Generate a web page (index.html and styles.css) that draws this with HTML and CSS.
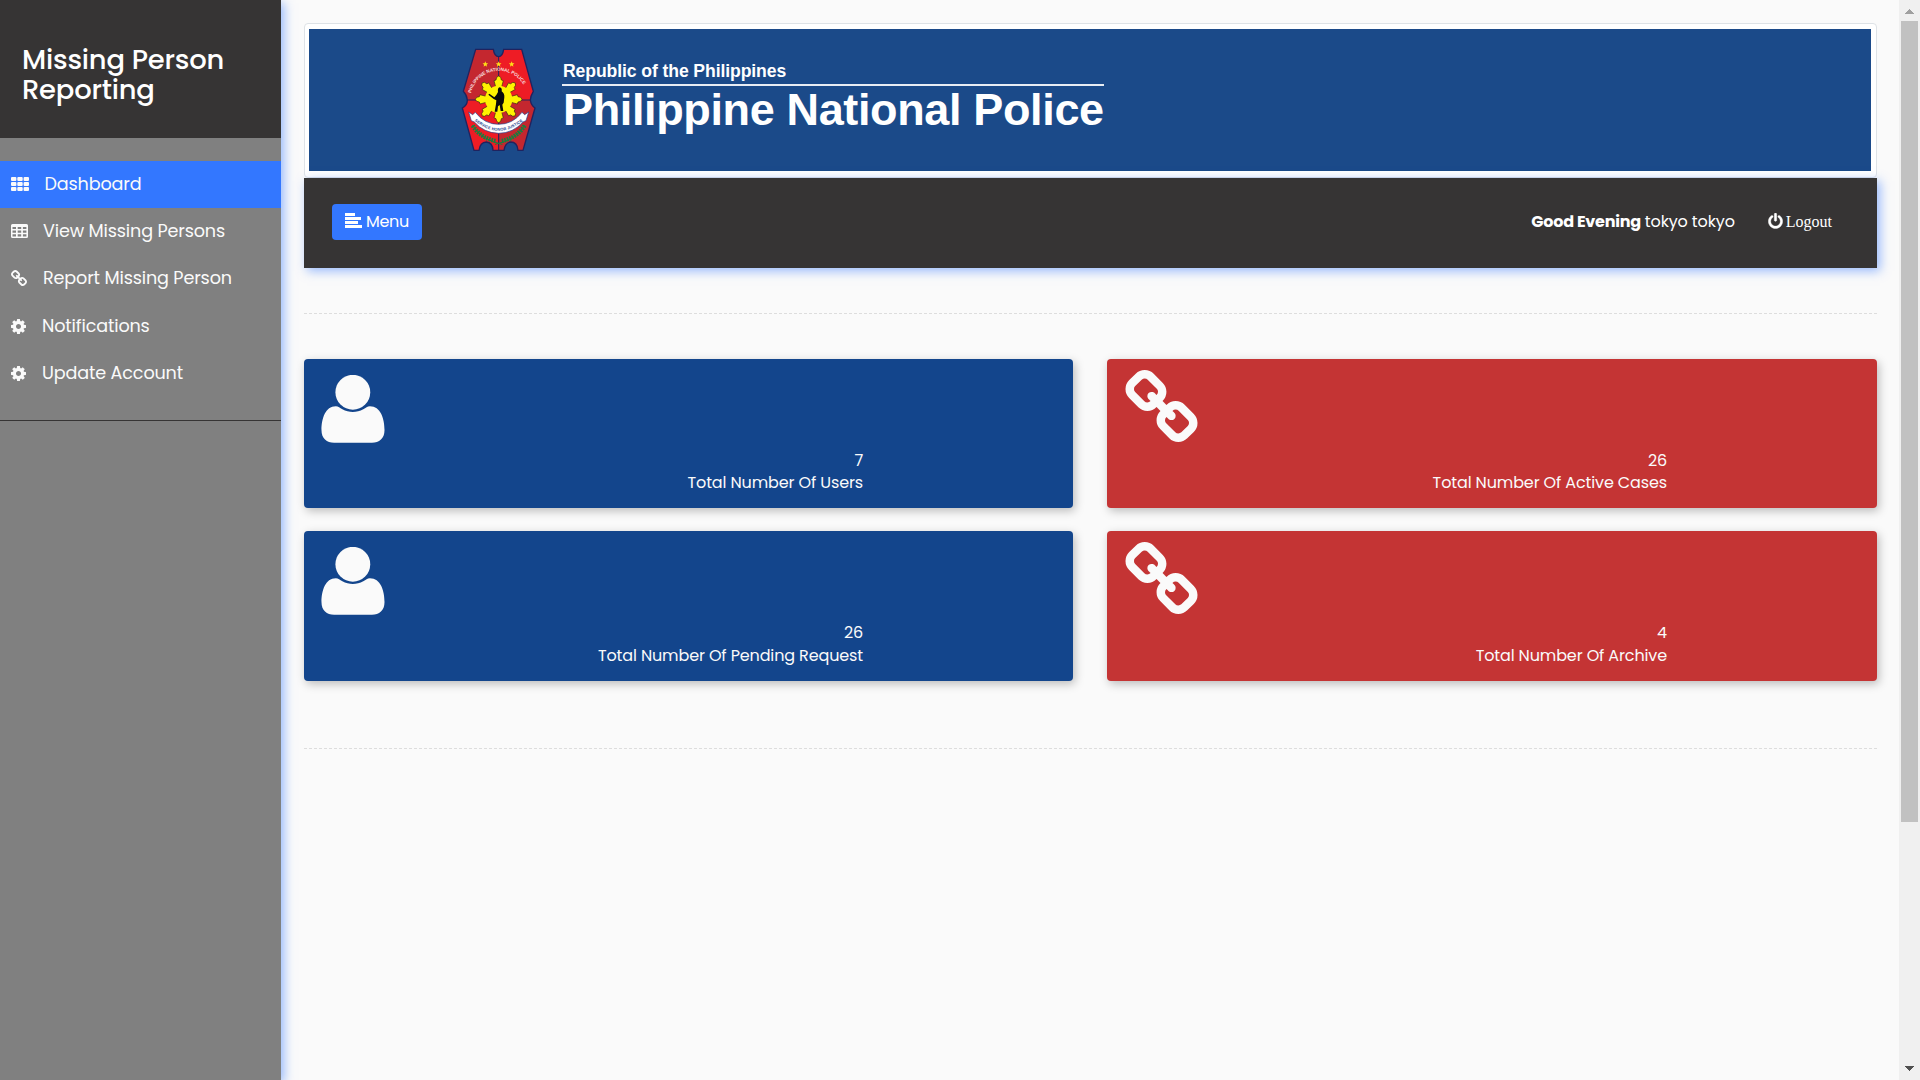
FILE: index.html
```html
<!DOCTYPE html>
<html lang="en">
<head>
<meta charset="utf-8">
<title>Missing Person Reporting</title>
<link rel="stylesheet" href="styles.css">
</head>
<body>
<svg class="defs" aria-hidden="true">
  <symbol id="i-link" viewBox="80 16 1632 1632"><path d="M1520 1216q0-40-28-68l-208-208q-28-28-68-28-42 0-72 32 3 3 19 18.500t21.500 21.500 15 19 13 25.500 3.500 27.500q0 40-28 68t-68 28q-15 0-27.500-3.500t-25.500-13-19-15-21.500-21.500-18.500-19q-33 31-33 73 0 40 28 68l206 207q27 27 68 27 40 0 68-26l147-146q28-28 28-67zm-703-705q0-40-28-68l-206-207q-28-28-68-28-39 0-68 27l-147 146q-28 28-28 67 0 40 28 68l208 208q27 27 68 27 42 0 72-31-3-3-19-18.500t-21.500-21.500-15-19-13-25.500-3.500-27.500q0-40 28-68t68-28q15 0 27.500 3.500t25.500 13 19 15 21.500 21.500 18.500 19q33-31 33-73zm895 705q0 120-85 203l-147 146q-83 83-203 83-121 0-204-85l-206-207q-83-83-83-203 0-123 88-209l-88-88q-86 88-208 88-120 0-204-84l-208-208q-84-84-84-204t85-203l147-146q83-83 203-83 121 0 204 85l206 207q83 83 83 203 0 123-88 209l88 88q86-88 208-88 120 0 204 84l208 208q84 84 84 204z"/></symbol>
  <symbol id="i-cog" viewBox="128 128 1536 1536"><path d="M1152 896q0-106-75-181t-181-75-181 75-75 181 75 181 181 75 181-75 75-181zm512-109v222q0 12-8 23t-20 13l-185 28q-19 54-39 91 35 50 107 138 10 12 10 25t-9 23q-27 37-99 108t-94 71q-12 0-26-9l-138-108q-44 23-91 38-16 136-29 186-7 28-36 28h-222q-14 0-24.500-8.500t-11.500-21.500l-28-184q-49-16-90-37l-141 107q-10 9-25 9-14 0-25-11-126-114-165-168-7-10-7-23 0-12 8-23 15-21 51-66.500t54-70.500q-27-50-41-99l-183-27q-13-2-21-12.500t-8-23.500v-222q0-12 8-23t19-13l186-28q14-46 39-92-40-57-107-138-10-12-10-24 0-10 9-23 26-36 98.500-107.500t94.500-71.500q13 0 26 10l138 107q44-23 91-38 16-136 29-186 7-28 36-28h222q14 0 24.500 8.500t11.500 21.500l28 184q49 16 90 37l142-107q9-9 24-9 13 0 25 10 129 119 165 170 7 8 7 22 0 12-8 23-15 21-51 66.500t-54 70.500q26 50 41 98l183 28q13 2 21 12.500t8 23.500z"/></symbol>
  <symbol id="i-user" viewBox="93 104 192 205"><circle cx="188.500" cy="156" r="52.500"/><path d="M94 270C94 235 106 198 137 198C145 198 149 203 157 207C177 218 200 218 220 207C228 203 232 198 240 198C272 198 284 235 284 270C284 296 268 308.500 246 308.500H132C110 308.500 94 296 94 270Z"/></symbol>
</svg>
<div class="page">
  <nav class="sidebar">
    <header class="sidebar-head"><h3>Missing Person Reporting</h3></header>
    <ul class="menu">
      <li class="active"><svg class="ico ico-th" viewBox="0 0 18 14"><path d="M1 0h3.400a1 1 0 0 1 1 1v2a1 1 0 0 1-1 1H1a1 1 0 0 1-1-1V1a1 1 0 0 1 1-1zm6.300 0h3.400a1 1 0 0 1 1 1v2a1 1 0 0 1-1 1H7.300a1 1 0 0 1-1-1V1a1 1 0 0 1 1-1zm6.300 0H17a1 1 0 0 1 1 1v2a1 1 0 0 1-1 1h-3.400a1 1 0 0 1-1-1V1a1 1 0 0 1 1-1zM1 5h3.400a1 1 0 0 1 1 1v2a1 1 0 0 1-1 1H1a1 1 0 0 1-1-1V6a1 1 0 0 1 1-1zm6.300 0h3.400a1 1 0 0 1 1 1v2a1 1 0 0 1-1 1H7.300a1 1 0 0 1-1-1V6a1 1 0 0 1 1-1zm6.300 0H17a1 1 0 0 1 1 1v2a1 1 0 0 1-1 1h-3.400a1 1 0 0 1-1-1V6a1 1 0 0 1 1-1zM1 10h3.400a1 1 0 0 1 1 1v2a1 1 0 0 1-1 1H1a1 1 0 0 1-1-1v-2a1 1 0 0 1 1-1zm6.300 0h3.400a1 1 0 0 1 1 1v2a1 1 0 0 1-1 1H7.300a1 1 0 0 1-1-1v-2a1 1 0 0 1 1-1zm6.300 0H17a1 1 0 0 1 1 1v2a1 1 0 0 1-1 1h-3.400a1 1 0 0 1-1-1v-2a1 1 0 0 1 1-1z"/></svg><span>Dashboard</span></li>
      <li class="up"><svg class="ico ico-table" viewBox="0 0 17 14"><path fill-rule="evenodd" d="M1.500 0h14A1.500 1.500 0 0 1 17 1.500v11a1.500 1.500 0 0 1-1.500 1.500h-14A1.500 1.500 0 0 1 0 12.500v-11A1.500 1.500 0 0 1 1.500 0zM1.500 3v2h3.500V3zm5.200 0v2h3.500V3zm5.200 0v2h3.500V3zM1.500 6.500v2.200h3.500V6.500zm5.200 0v2.200h3.500V6.500zm5.200 0v2.200h3.500V6.500zM1.500 10.200v2.200h3.500v-2.200zm5.200 0v2.200h3.500v-2.200zm5.200 0v2.200h3.500v-2.200z"/></svg><span>View Missing Persons</span></li>
      <li class="up"><svg class="ico ico-link"><use href="#i-link"/></svg><span>Report Missing Person</span></li>
      <li><svg class="ico ico-cog"><use href="#i-cog"/></svg><span>Notifications</span></li>
      <li><svg class="ico ico-cog"><use href="#i-cog"/></svg><span>Update Account</span></li>
    </ul>
  </nav>
  <main class="content">
    <div class="thumb">
      <div class="banner">
        <svg class="badge" viewBox="60 51 234 315">
          <defs>
            <clipPath id="shield"><path d="M107 58H160Q163 79 176 80Q188 79 191 58H245L280 184Q271 199 271 210Q273 226 285 234L249 361H234Q232 336 212 336Q195 338 192 361H159Q158 338 139 336Q120 337 117 361H102L67 234Q82 226 82 210Q80 194 70 184Z"/></clipPath>
            <path id="arc" d="M93 190A86 86 0 0 1 261 190"/>
            <path id="motto" d="M102 271Q176 334 251 271"/>
          </defs>
          <g clip-path="url(#shield)">
            <path fill="#ee1c25" d="M60 50H300V370H60z"/>
            <path fill="#c4272f" d="M60 50H176V210H60zM176 210H300V370H176z"/>
            <path fill="none" stroke="#20235f" stroke-width="3" d="M176 80V361M82 210H271"/>
          </g>
          <path fill="none" stroke="#20235f" stroke-width="4" d="M107 58H160Q163 79 176 80Q188 79 191 58H245L280 184Q271 199 271 210Q273 226 285 234L249 361H234Q232 336 212 336Q195 338 192 361H159Q158 338 139 336Q120 337 117 361H102L67 234Q82 226 82 210Q80 194 70 184Z"/>
          <g fill="#ffde17">
            <path id="star" d="M136 94l2.400 5.600 6 .5-4.600 4 1.400 5.900-5.200-3.200-5.200 3.200 1.400-5.900-4.600-4 6-.5z"/>
            <use href="#star" x="40"/><use href="#star" x="79"/>
          </g>
          <g fill="#fff200" stroke="#3b2a10" stroke-width="2">
            <g id="rays"><path id="ray" d="M169 178L162 152 168 150 170 142 176 138 182 142 184 150 190 152 183 178Z"/><use href="#ray" transform="rotate(180 176 208)"/></g>
            <use href="#rays" transform="rotate(45 176 208)"/><use href="#rays" transform="rotate(90 176 208)"/><use href="#rays" transform="rotate(135 176 208)"/>
            <circle cx="176" cy="208" r="41" stroke="none"/>
          </g>
          <path fill="#0b0b0b" d="M174 186Q172 174 179 172Q187 174 185 184Q194 190 193 202L191 218 187 224 190 243H182L179 225 174 229 172 245H164L168 222 169 211 161 207 145 194 148 191 163 202 169 195Z"/>
          <g fill="none" stroke="#16803e" stroke-linecap="round">
            <path stroke-width="13" stroke-linecap="butt" stroke-dasharray="5 3" d="M98 287Q124 326 168 333M254 287Q228 326 184 333"/>
            <path stroke-width="3" d="M98 287Q124 330 186 343M254 287Q228 330 166 343"/>
          </g>
          <path fill="#fff" stroke="#20408f" stroke-width="2" d="M86 246L98 254 106 247Q134 283 176 283Q218 283 246 247L254 254 266 246 258 272 249 276Q220 309 176 310Q132 309 103 276L94 272Z"/>
          <text class="arc-text"><textPath href="#arc" textLength="204">PHILIPPINE NATIONAL POLICE</textPath></text>
          <text class="motto-text"><textPath href="#motto" startOffset="2" textLength="160">SERVICE HONOR JUSTICE</textPath></text>
        </svg>
        <div class="brand"><div class="brand-top">Republic of the Philippines</div><div class="brand-name">Philippine National Police</div></div>
      </div>
    </div>
    <div class="navbar">
      <button class="menu-btn"><svg class="ico-align" viewBox="0 0 17 15"><path d="M0 0h10v3H0zM0 4h16v3H0zM0 8h13v3H0zM0 12h17v3H0z"/></svg><span>Menu</span></button>
      <div class="user"><b>Good Evening</b><span class="name">tokyo tokyo</span></div>
      <a class="logout"><svg class="ico-power" viewBox="128 0 1536 1664"><path d="M1664 896q0 156-61 298t-164 245-245 164-298 61-298-61-245-164-164-245-61-298q0-182 80.500-343t226.500-270q43-32 95.500-25t83.500 50q32 42 24.500 94.500t-49.500 84.500q-98 74-151.500 181t-53.500 228q0 104 40.500 198.500t109.500 163.500 163.500 109.500 198.500 40.500 198.500-40.500 163.500-109.500 109.500-163.500 40.500-198.500q0-121-53.500-228t-151.500-181q-42-32-49.500-84.500t24.500-94.500q31-43 84-50t95 25q146 109 226.500 270t80.500 343zm-640-768v640q0 52-38 90t-90 38-90-38-38-90v-640q0-52 38-90t90-38 90 38 38 90z"/></svg><span>Logout</span></a>
    </div>
    <div class="line"></div>
    <section class="cards">
      <article class="card blue"><svg class="big-user"><use href="#i-user"/></svg><p>7</p><p>Total Number Of Users</p></article>
      <article class="card red"><svg class="big-link"><use href="#i-link"/></svg><p>26</p><p>Total Number Of Active Cases</p></article>
      <article class="card blue"><svg class="big-user"><use href="#i-user"/></svg><p>26</p><p>Total Number Of Pending Request</p></article>
      <article class="card red"><svg class="big-link"><use href="#i-link"/></svg><p>4</p><p>Total Number Of Archive</p></article>
    </section>
    <div class="line line-end"></div>
  </main>
  <aside class="scroll">
    <svg class="arrow" viewBox="0 0 9 5"><path fill="#a0a0a0" d="M4 0h1v1h1v1h1v1h1v1h1v1H0V4h1V3h1V2h1V1h1z"/></svg>
    <div class="scroll-thumb"></div>
    <svg class="arrow arrow-down" viewBox="0 0 9 5"><path fill="#505050" d="M0 0h9v1H8v1H7v1H6v1H5v1H4V4H3V3H2V2H1V1H0z"/></svg>
  </aside>
</div>
</body>
</html>
```
FILE: styles.css
```css
* { box-sizing: border-box; }
body {
  margin: 0;
  background: #fafafa;
  color: #fff;
  font: 16px/1.41 Poppins, Inter, sans-serif;
  overflow: hidden;
}
svg { display: block; fill: currentColor; flex: none; }
.defs { display: none; }
h3, p, ul { margin: 0; padding: 0; }
.page { display: flex; height: 1080px; }

/* sidebar */
.sidebar { width: 281px; background: #808080; box-shadow: 3px 3px 10px rgba(51, 119, 255, .5); }
.sidebar-head { height: 138px; padding: 45px 20px 0 22px; background: #363434; }
.sidebar-head h3 { font-size: 27.4px; font-weight: 500; line-height: 30.4px; letter-spacing: -.2px; }
.menu { list-style: none; padding: 23px 0; border-bottom: 1px solid #363434; }
.menu li { display: flex; align-items: center; height: 47.3px; padding-left: 11px; font-size: 17.6px; letter-spacing: -.14px; color: #fafafa; }
.menu .active { background: #37f; }
.menu .up { padding-bottom: 1px; }
.ico { margin: -1px 15.500px 0 0; }
.ico-th { width: 18px; height: 14px; }
.ico-table { width: 17px; height: 14px; margin-right: 15px; }
.ico-link { width: 16px; height: 16px; }
.ico-cog { width: 15px; height: 15px; }
.ico-link, .ico-cog { margin-right: 16px; }

/* banner */
.content { flex: 1; padding: 23px 22px 0 23px; }
.thumb { height: 155px; padding: 5px 5px 0 4px; background: #fff; border: 1px solid #dee2e6; border-radius: 4px; }
.banner { display: flex; height: 142px; padding: 18px 0 0 151px; background: #1b4a89; font-family: "Liberation Sans", Arial, sans-serif; font-weight: 700; }
.badge { width: 78px; height: 105px; }
.brand { width: 542px; margin: 11px 0 0 24px; white-space: nowrap; }
.brand-top { height: 28px; padding-left: 1px; border-bottom: 2px solid #e8edf4; font-size: 17.6px; line-height: 27px; letter-spacing: -.1px; }
.brand-name { padding-left: 1px; font-size: 45px; line-height: 48px; letter-spacing: -.36px; }
.arc-text { font-size: 14px; fill: #f6dede; }
.motto-text { font-size: 12px; fill: #20408f; }

/* top bar */
.navbar { display: flex; align-items: center; height: 90px; padding: 0 45px 2px 28px; background: #363434; box-shadow: 3px 3px 10px rgba(51, 119, 255, .5); position: relative; }
.menu-btn { display: flex; align-items: center; gap: 4px; width: 90px; height: 36px; padding: 1px 0 0 13px; border: 0; border-radius: 4px; background: #37f; color: #fff; font: inherit; letter-spacing: -.3px; }
.ico-align { width: 17px; height: 15px; margin-top: -4px; }
.user { display: flex; gap: 4px; margin: 1px 0 0 auto; }
.user b { letter-spacing: -.25px; }
.name { letter-spacing: -.13px; }
.logout { display: flex; align-items: center; gap: 3px; margin: 1px 0 0 33px; font-family: "Liberation Serif", serif; }
.ico-power { width: 15px; height: 15.500px; margin-top: -3px; stroke: currentColor; stroke-width: 40; }

/* figures */
.line { height: 46px; border-bottom: 1px dashed #ddd; }
.cards { display: grid; grid-template-columns: 769px 770px; grid-auto-rows: 149.6px; gap: 22.9px 34px; margin-top: 44.7px; }
.card { padding-right: 210px; border-radius: 4px; box-shadow: 2px 3px 10px rgba(0, 0, 0, .25); color: #fafafa; line-height: 22.6px; letter-spacing: -.13px; text-align: right; }
.blue { background: #13458c; }
.red { background: #c43434; }
.big-user { width: 64px; height: 68px; margin: 16px 0 7px 17px; }
.big-link { width: 73px; height: 72px; margin: 11px 0 8px 18px; }
.line-end { height: 68.2px; }

/* scrollbar */
.scroll { display: flex; flex-direction: column; align-items: center; width: 21px; padding: 9px 0; background: #f0f0f0; }
.scroll-thumb { width: 17px; height: 801px; margin-top: 7px; background: #c1c1c1; }
.arrow { width: 9px; height: 5px; }
.arrow-down { margin-top: auto; }
```
